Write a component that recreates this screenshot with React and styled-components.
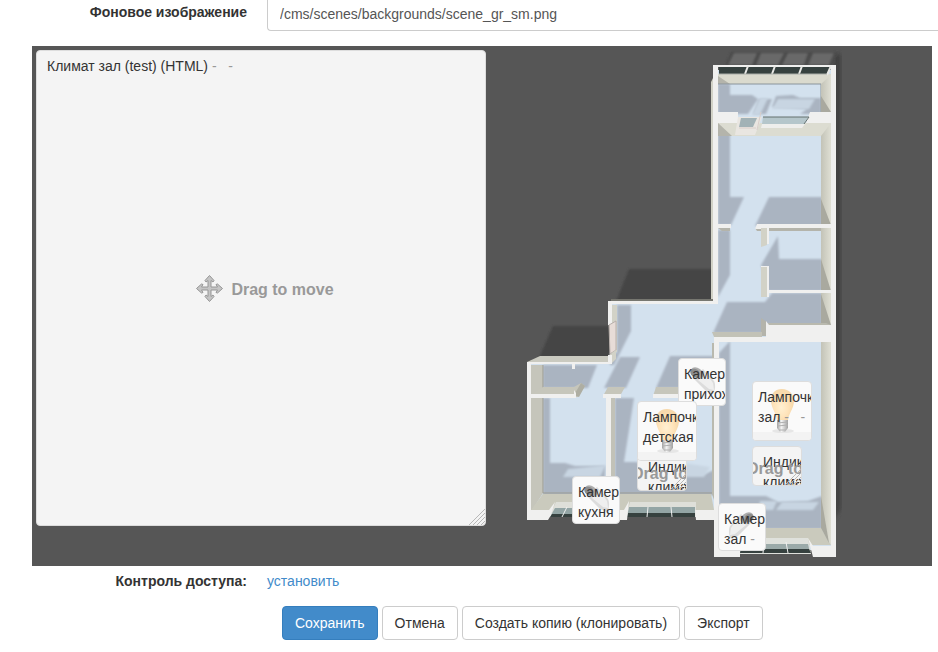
import React from 'react'
import styled, {createGlobalStyle} from 'styled-components'

const GlobalStyle = createGlobalStyle`
    * {
        box-sizing: border-box;
    }
    body {
        margin: 0;
        background: #fff;
        color: #333;
        font-family: "Liberation Sans", Arial, sans-serif;
        font-size: 14px;
        line-height: 20px;
        overflow: hidden;
    }
`
const SceneForm = styled.form`
    display: flex;
    flex-direction: column;
`
const FormRow = styled.div`
    display: grid;
    grid-template-columns: 247px 1fr;
    column-gap: 20px;
    align-items: start;
`
const Label = styled.label`
    padding-top: ${({$top}) => $top}px;
    font-weight: bold;
    text-align: right;
`
const TextInput = styled.input`
    width: 100%;
    height: 31px;
    padding: 0 12px 2px;
    border: 1px solid #ccc;
    border-width: 0 0 1px 1px;
    border-radius: 0 0 0 4px;
    background: #fff;
    color: #555;
    font: inherit;
    outline: none;
`
const Stage = styled.div`
    position: relative;
    height: 520px;
    margin: 15px 6px 5px 32px;
    background: #565656;
    overflow: hidden;
`
const Plan = styled.svg`
    display: block;
`
const Widget = styled.div`
    position: absolute;
    left: ${({$x}) => $x}px;
    top: ${({$y}) => $y}px;
    width: ${({$w}) => $w}px;
    height: ${({$h}) => $h}px;
    padding: ${({$html}) => $html ? '5px 10px' : '5px'};
    border: 1px solid #ddd;
    border-radius: 4px;
    background: ${({$html}) => $html ? '#f4f4f4' : '#fafafa'};
    overflow: hidden;
`
const Title = styled.div`
    position: relative;
`
const Dashes = styled.span`
    color: #999;
    white-space: pre;
`
const Picture = styled.svg`
    position: absolute;
    left: 0;
    top: 0;
    width: 100%;
    height: 100%;
`
const DragHint = styled.div`
    position: absolute;
    left: ${({$small}) => $small ? '-6px' : '8px'};
    right: 0;
    top: ${({$small}) => $small ? '12px' : '0'};
    bottom: ${({$small}) => $small ? 'auto' : '0'};
    display: flex;
    align-items: center;
    justify-content: ${({$small}) => $small ? 'flex-start' : 'center'};
    gap: 8px;
    color: #999;
    font-size: 16px;
    font-weight: bold;
    white-space: nowrap;
`
const HintText = styled.span`
    padding-top: ${({$small}) => $small ? '0' : '4px'};
`
const Grip = styled.svg`
    position: absolute;
    right: 0;
    bottom: 0;
`
const Link = styled.a`
    color: #428bca;
    text-decoration: none;
`
const Actions = styled.div`
    display: flex;
    gap: 4px;
    margin: 15px 0 12px 282px;
`
const Button = styled.button`
    height: 34px;
    padding: 0 12px;
    border: 1px solid ${({$primary}) => $primary ? '#357ebd' : '#ccc'};
    border-radius: 4px;
    background: ${({$primary}) => $primary ? '#428bca' : '#fff'};
    color: ${({$primary}) => $primary ? '#fff' : '#333'};
    font: inherit;
    white-space: nowrap;
    cursor: pointer;
`

const FLOOR = '#d3e1ee'
const SHADE = '#aab4c1'
const TOP = '#f0f0ef'
const SIDE = '#d2d2c7'
const SIDE_DARK = '#b4b4ab'
const GLASS = '#36413f'

const FloorPlan = () => (
    <Plan width="900" height="520" viewBox="32 46 900 520" aria-hidden="true">
        <defs>
            <filter id="soft"><feGaussianBlur stdDeviation="1"/></filter>
            <filter id="softer"><feGaussianBlur stdDeviation="2"/></filter>
            <linearGradient id="innerWall">
                <stop offset="0" stopColor="#c3c3b7"/>
                <stop offset="1" stopColor="#dfdfd4"/>
            </linearGradient>
        </defs>

        {/* outside shadows */}
        <path d="M834 54H841V508L834 520Z" fill="#404040" filter="url(#softer)"/>
        <path d="M725 66L731 52H838L832 66Z" fill="#4c4c4c" filter="url(#soft)"/>
        <path d="M728 65L734 53H757L752 65ZM756 65L761 53H784L778 65ZM782 65L788 53H808L804 65ZM808 65L813 53H834L829 65Z" fill="#696969" filter="url(#soft)"/>
        <path d="M616 302L629 269H714V302Z" fill="#444" filter="url(#soft)"/>
        <path d="M539 358L553 326H611V358Z" fill="#444" filter="url(#soft)"/>

        {/* floors */}
        <path d="M713 70H831V550H714V512H531V364H612V303H713Z" fill={FLOOR}/>

        {/* floor shadows */}
        <g fill={SHADE} filter="url(#soft)">
            <path d="M718 84H730V95H752L758 99L748 114H718ZM776 96L793 95L800 98H821V114H800L807 109L772 107ZM759 99H772L766 114H753Z"/>
            <path d="M718 124H730V197H744L731 225H718Z"/>
            <path d="M769 197H822V226H755Z"/>
            <path d="M718 230H730V275L718 297Z"/>
            <path d="M778 236L779 259H822V291H768L761 265Z"/>
            <path d="M727 302H765L772 293H822V325H768L765 333H713Z"/>
            <path d="M617 305H631V331L614 365H610V353H617Z"/>
            <path d="M543 365H597L588 388H543Z"/>
            <path d="M629 357H640L626 388H604L620 357Z"/>
            <path d="M670 356H714V388H656Z"/>
            <path d="M543 398H550V463H565L575 466H605V495H543Z"/>
            <path d="M615 398H634L624 462H637L645 470L705 474L714 470V495H615Z"/>
            <path d="M719 353L730 341V496H766L778 502L808 501L822 496V529H719Z"/>
        </g>
        <g fill="#c8d5e2" filter="url(#soft)">
            <path d="M760 98H768L760 115H752ZM778 99H815L809 109H772Z"/>
            <path d="M568 469L606 465L600 477H563Z"/>
            <path d="M683 463L710 467L704 477H681Z"/>
            <path d="M760 501H777L773 510H758ZM782 502H819L813 510H776Z"/>
        </g>

        {/* northern rooms, inner wall sides */}
        <path d="M718 74H831V84H718Z" fill="#dadace"/>
        <path d="M718 76L730 84H718Z" fill={SIDE_DARK}/>
        <path d="M718 84H821M821 84V112" stroke="#8a949b"/>
        <path d="M821 84L831 75V545L821 528Z" fill="url(#innerWall)"/>
        <path d="M821 96L831 112H821ZM821 199L831 225H821ZM821 259L831 291H821ZM821 294L831 325H821Z" fill="#a9a99f"/>
        <path d="M718 123H831L821 136H718Z" fill="#dcdcd1"/>
        <path d="M718 123L732 136H718Z" fill={SIDE_DARK}/>
        <path d="M711 82L713 78V300H711Z" fill={SIDE}/>

        {/* northern rooms, wall tops and windows */}
        <path d="M713 65H836V67H713Z" fill={TOP}/>
        <path d="M719 67H830L827 74H719Z" fill={GLASS}/>
        <path d="M748 66L745 74M775 66L772 74M802 66L799 74M831 66L827 75" stroke="#e9e9e6" strokeWidth="2" fill="none"/>
        <path d="M719 74H827" stroke="#a9aea9"/>
        <path d="M713 65H718V303H713ZM831 65H836V557H831Z" fill={TOP}/>
        <path d="M713 112H738V123H713ZM810 112H836V123H806Z" fill={TOP}/>
        <path d="M738 117H762L755 135H735Z" fill="#e9e6e1"/>
        <path d="M741 118H757L753 127H739Z" fill="#a2b2b6"/>
        <path d="M761 112L757 130M739 128H756" stroke="#d9ceca"/>
        <path d="M763 117H808L804 124H762Z" fill="#b5c6cb"/>
        <path d="M763 117H809L804 124" stroke="#65716f" fill="none"/>
        <path d="M762 124H805L802 128H761Z" fill="#eeeeec"/>

        <path d="M718 228H730V231H722ZM755 228H821V231H757Z" fill={SIDE_DARK}/>
        <path d="M713 224H731V228H713ZM757 224H831V228H769V244H767V229H755Z" fill={TOP}/>
        <path d="M761 228H767V245L761 247ZM761 267H767V297H761Z" fill={SIDE}/>
        <path d="M761 266H769V297H767V267H761ZM768 290H831V293H768Z" fill={TOP}/>
        <path d="M761 318L767 322V336H761Z" fill={SIDE_DARK}/>
        <path d="M712 332H762V337H714Z" fill="#c2c2b7"/>
        <path d="M768 323H826L831 325H768Z" fill="#b9b9ae"/>
        <path d="M766 321L769 325H836V342H719L714 343V337H766Z" fill={TOP}/>

        {/* hall */}
        <path d="M611 299H713V301H611Z" fill="#777770"/>
        <path d="M608 301H718V304H612V325H608Z" fill={TOP}/>
        <path d="M612 305H617V352H612Z" fill={SIDE}/>
        <path d="M609 325L616 321V350L610 354Z" fill="#e7dcd7" stroke="#b8b0ac" strokeWidth="1"/>
        <path d="M609 355L616 350V359L612 363H609Z" fill={SIDE}/>

        {/* kitchen and nursery */}
        <path d="M527 362L540 356H609V362Z" fill="#cacac0"/>
        <path d="M531 365H543V493L531 512Z" fill="#c5c5bb"/>
        <path d="M543 365V493H713" stroke="#9b9b91" fill="none"/>
        <path d="M527 362H608V355H612V364H531V520H527Z" fill={TOP}/>
        <path d="M572 364H575V369H572Z" fill={TOP}/>
        <path d="M543 387H574L581 383L585 386L578 397H531V394ZM608 387H625L620 396H603ZM656 387H714V396H653Z" fill="#c6c6bb"/>
        <path d="M574 395L581 383L585 386L579 397Z" fill="#aeaea3"/>
        <path d="M531 394H574V390L576 393V398H531ZM603 394H621V398H611V512H606V398H603ZM653 394H714V398H653Z" fill={TOP}/>
        <path d="M611 398H615V494L611 501Z" fill="#c2c2b8"/>
        <path d="M712 343H714V500L712 494Z" fill="#b9b9ae"/>
        <path d="M543 494H605V510H531ZM615 494H711L714 510H611Z" fill="#cacabd"/>
        <path d="M556 502H606L603 517H549ZM630 502H696V517H626Z" fill="#dedfd9"/>
        <path d="M555 508H605V517H550ZM629 507H695V517H627Z" fill="#93a5a5"/>
        <path d="M552 514H605V517H550ZM628 513H695V517H627Z" fill={GLASS}/>
        <path d="M567 507L562 517M648 507L647 517M671 507L672 517" stroke="#f0f0f0"/>
        <path d="M527 510H549L555 502L551 515L548 520H527ZM605 510H624L629 501L627 520H605ZM695 510H715V520H696Z" fill={TOP}/>

        {/* living room */}
        <path d="M719 528H821L831 545H719Z" fill="#cacabd"/>
        <path d="M821 496L829 543L821 528Z" fill="#a9a99f"/>
        <path d="M714 341H719V545H740V557H714Z" fill={TOP}/>
        <path d="M742 538H808L811 554H740Z" fill="#dfe1dc"/>
        <path d="M742 544H808L810 553H740Z" fill="#9baaa9"/>
        <path d="M741 549H809L811 553H740Z" fill={GLASS}/>
        <path d="M764 542L763 553M786 542L788 553" stroke="#f0f0f0"/>
        <path d="M808 538L813 546H831V535H836V557H813Z" fill={TOP}/>
    </Plan>
)

const Bulb = () => (
    <Picture viewBox="0 0 58 58">
        <defs>
            <radialGradient id="glow" cx=".45" cy=".6">
                <stop offset="0" stopColor="#fff0d2"/>
                <stop offset=".6" stopColor="#ffe4bb"/>
                <stop offset="1" stopColor="#f7d9ac"/>
            </radialGradient>
            <linearGradient id="cap">
                <stop offset="0" stopColor="#a0a0a0"/>
                <stop offset=".4" stopColor="#f4f4f4"/>
                <stop offset="1" stopColor="#a0a0a0"/>
            </linearGradient>
        </defs>
        <path d="M0 50H58V58H0Z" fill="#f3f3f3"/>
        <ellipse cx="30" cy="49" rx="11" ry="2" fill="#e6e6e6"/>
        <path d="M29 7C21 7 17 13 18 20C19 27 23 31 24 38H35C36 31 41 26 41 19C41 12 36 7 29 7Z" fill="url(#glow)"/>
        <path d="M24 38H35V46L32 50H27L24 46Z" fill="url(#cap)"/>
        <path d="M24 41L35 40M24 44L35 43M26 48H33" stroke="#b0b0b0"/>
    </Picture>
)

const Camera = ({flip}) => (
    <Picture viewBox="0 0 46 46">
        <g transform={flip ? 'translate(46 0) scale(-1 1)' : undefined}>
            <path d="M14 19L24 10L35 22C37 26 36 32 34 35L27 32L21 26Z" fill="#dcdcdc"/>
            <path d="M19 21L27 14L34 24L35 31L30 30Z" fill="#efefef"/>
            <ellipse cx="18" cy="14" rx="7" ry="5" transform="rotate(35 18 14)" fill="#adadad"/>
            <ellipse cx="16" cy="14" rx="5" ry="4" transform="rotate(35 16 14)" fill="#8c8c8c"/>
        </g>
    </Picture>
)

const MoveIcon = () => (
    <svg width="27" height="27" viewBox="0 0 27 27" aria-hidden="true">
        <path
            d="M13.5 .5L18 5.500L17 7L15 5.500V12H21.500L20 9.500L21.500 9L26.500 13.500L21.500 18L20 17.500L21.500 15H15V21.500L17 20L18 21.500L13.500 26.500L9 21.500L10 20L12 21.500V15H5.500L7 17.500L5.500 18L.5 13.500L5.500 9L7 9.500L5.500 12H12V5.500L10 7L9 5.500Z"
            fill="#c4c4c4" stroke="#969696"
        />
    </svg>
)

const ResizeGrip = () => (
    <Grip width="16" height="16" viewBox="0 0 16 16" aria-hidden="true">
        <path d="M0 16L16 0M4 16L16 4M8 16L16 8M12 16L16 12" stroke="#b8b8b8"/>
    </Grip>
)

// positions are relative to the stage
const widgets = [
    {id: 'climate', kind: 'html', x: 4, y: 4, w: 450, h: 476, title: 'Климат зал (test) (HTML)', dashes: 2},
    {id: 'cam-hall', kind: 'camera', x: 646, y: 312, w: 48, h: 48, title: 'Камера прихожая'},
    {id: 'ind-nursery', kind: 'html', small: true, x: 605, y: 405, w: 50, h: 40, title: 'Индикатор климата'},
    {id: 'lamp-nursery', kind: 'lamp', x: 605, y: 355, w: 60, h: 60, title: 'Лампочка детская'},
    {id: 'lamp-living', kind: 'lamp', x: 720, y: 335, w: 60, h: 60, title: 'Лампочка зал', dashes: 2},
    {id: 'ind-living', kind: 'html', small: true, x: 720, y: 400, w: 50, h: 40, title: 'Индикатор климата'},
    {id: 'cam-kitchen', kind: 'camera', x: 540, y: 430, w: 48, h: 48, title: 'Камера кухня'},
    {id: 'cam-living', kind: 'camera', flip: true, x: 686, y: 457, w: 48, h: 48, title: 'Камера зал', dashes: 1},
]

const dashText = ['', '\u00a0-', '\u00a0-\u00a0\u00a0\u00a0-']

const SceneWidget = ({kind, small, flip, x, y, w, h, title, dashes = 0}) => (
    <Widget $x={x} $y={y} $w={w} $h={h} $html={kind === 'html'}>
        {kind === 'lamp' && <Bulb/>}
        {kind === 'camera' && <Camera flip={flip}/>}
        <Title>
            {title}
            {dashes > 0 && <Dashes>{dashText[dashes]}</Dashes>}
        </Title>
        {kind === 'html' && (
            <DragHint $small={small}>
                {!small && <MoveIcon/>}
                <HintText $small={small}>Drag to move</HintText>
            </DragHint>
        )}
        {kind === 'html' && <ResizeGrip/>}
    </Widget>
)

const App = () => (
    <>
        <GlobalStyle/>
        <SceneForm onSubmit={e => e.preventDefault()}>
            <FormRow>
                <Label htmlFor="background" $top={2}>Фоновое изображение</Label>
                <TextInput id="background" type="text" defaultValue="/cms/scenes/backgrounds/scene_gr_sm.png"/>
            </FormRow>

            <Stage>
                <FloorPlan/>
                {widgets.map(widget => <SceneWidget key={widget.id} {...widget}/>)}
            </Stage>

            <FormRow>
                <Label as="div" $top={0}>Контроль доступа:</Label>
                <div><Link href="#access">установить</Link></div>
            </FormRow>

            <Actions>
                <Button type="submit" $primary>Сохранить</Button>
                <Button type="button">Отмена</Button>
                <Button type="button">Создать копию (клонировать)</Button>
                <Button type="button">Экспорт</Button>
            </Actions>
        </SceneForm>
    </>
)

export default App
